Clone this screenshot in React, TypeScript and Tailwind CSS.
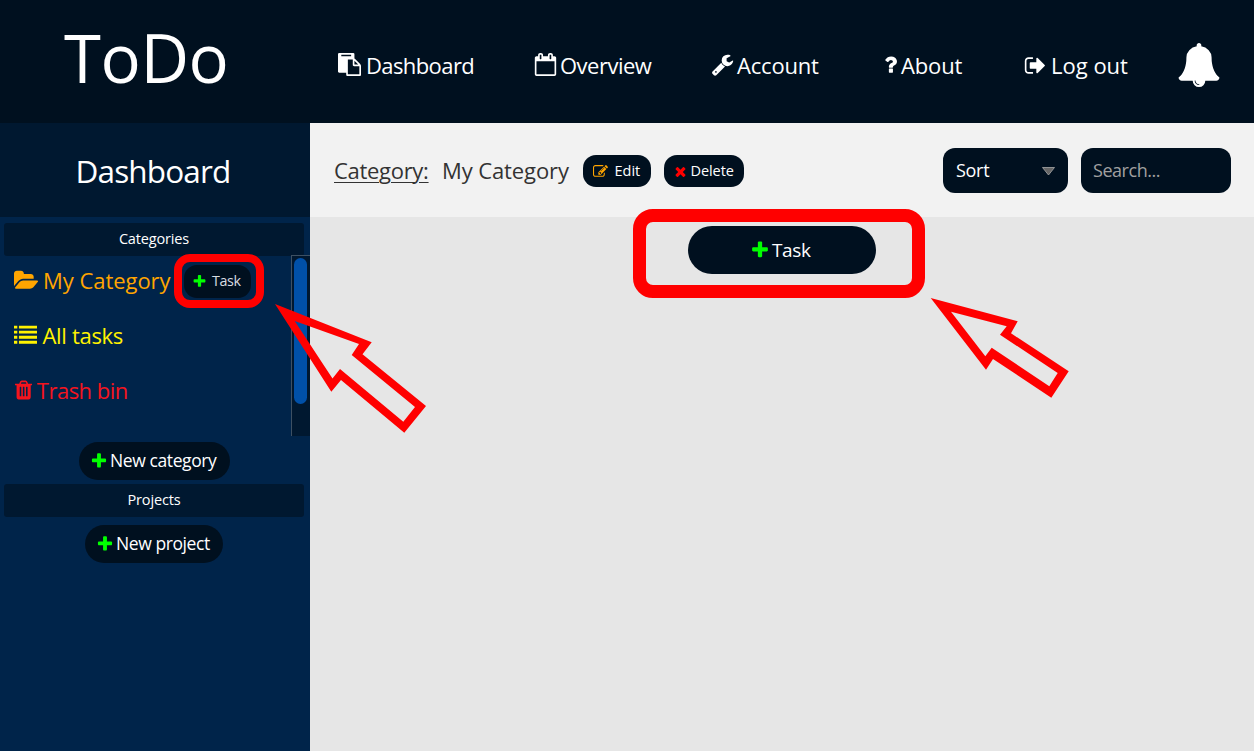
import React from "react";

const PATHS = {
  plus: "M1600 736v192q0 40-28 68t-68 28h-416v416q0 40-28 68t-68 28h-192q-40 0-68-28t-28-68v-416h-416q-40 0-68-28t-28-68v-192q0-40 28-68t68-28h416v-416q0-40 28-68t68-28h192q40 0 68 28t28 68v416h416q40 0 68 28t28 68z",
  times: "M1490 1322q0 40-28 68l-136 136q-28 28-68 28t-68-28l-294-294-294 294q-28 28-68 28t-68-28l-136-136q-28-28-28-68t28-68l294-294-294-294q-28-28-28-68t28-68l136-136q28-28 68-28t68 28l294 294 294-294q28-28 68-28t68 28l136 136q28 28 28 68t-28 68l-294 294 294 294q28 28 28 68z",
  clipboard: "M768 1664h896v-640h-416q-40 0-68-28t-28-68v-416h-384v1152zm256-1440v-64q0-13-9.5-22.5t-22.5-9.5h-704q-13 0-22.5 9.5t-9.5 22.5v64q0 13 9.5 22.5t22.5 9.5h704q13 0 22.5-9.5t9.5-22.5zm256 672h299l-299-299v299zm512 128v672q0 40-28 68t-68 28h-960q-40 0-68-28t-28-68v-160h-544q-40 0-68-28t-28-68v-1344q0-40 28-68t68-28h1088q40 0 68 28t28 68v328q21 13 36 28l408 408q28 28 48 76t20 88z",
  calendar: "M192 1664h1408v-1024h-1408v1024zm384-1216v-288q0-14-9-23t-23-9h-64q-14 0-23 9t-9 23v288q0 14 9 23t23 9h64q14 0 23-9t9-23zm768 0v-288q0-14-9-23t-23-9h-64q-14 0-23 9t-9 23v288q0 14 9 23t23 9h64q14 0 23-9t9-23zm384-64v1280q0 52-38 90t-90 38h-1408q-52 0-90-38t-38-90v-1280q0-52 38-90t90-38h128v-96q0-66 47-113t113-47h64q66 0 113 47t47 113v96h384v-96q0-66 47-113t113-47h64q66 0 113 47t47 113v96h128q52 0 90 38t38 90z",
  wrench: "M448 1472q0-26-19-45t-45-19-45 19-19 45 19 45 45 19 45-19 19-45zm644-420l-682 682q-37 37-90 37-52 0-91-37l-106-108q-38-36-38-90 0-53 38-91l681-681q39 98 114.5 173.5t173.5 114.5zm634-435q0 39-23 106-47 134-164.5 217.5t-258.5 83.5q-185 0-316.5-131.5t-131.5-316.5 131.5-316.5 316.5-131.5q58 0 121.5 16.5t107.5 46.5q16 11 16 28t-16 28l-293 169v224l193 107q5-3 79-48.5t135.5-81 70.5-35.5q15 0 23.5 10t8.5 25z",
  question: "M1088 1256v240q0 16-12 28t-28 12h-240q-16 0-28-12t-12-28v-240q0-16 12-28t28-12h240q16 0 28 12t12 28zm316-600q0 54-15.5 101t-35 76.5-55 59.5-57.5 43.5-61 35.5q-41 23-68.5 65t-27.5 67q0 17-12 32.5t-28 15.5h-240q-15 0-25.5-18.5t-10.5-37.5v-45q0-83 65-156.5t143-108.5q59-27 84-56t25-76q0-42-46.5-74t-107.5-32q-65 0-108 29-35 25-107 115-13 16-31 16-12 0-25-8l-164-125q-13-10-15.5-25t5.5-28q160-266 464-266 80 0 161 31t146 83 106 127.5 41 158.5z",
  signOut: "M704 1440q0 4 1 20t.5 26.5-3 23.5-10 19.5-20.5 6.5h-320q-119 0-203.5-84.5t-84.5-203.5v-704q0-119 84.5-203.5t203.5-84.5h320q13 0 22.5 9.5t9.5 22.5q0 4 1 20t.5 26.5-3 23.5-10 19.5-20.5 6.5h-320q-66 0-113 47t-47 113v704q0 66 47 113t113 47h312l11.5 1 11.5 3 8 5.5 7 9 2 13.5zm928-544q0 26-19 45l-544 544q-19 19-45 19t-45-19-19-45v-288h-448q-26 0-45-19t-19-45v-384q0-26 19-45t45-19h448v-288q0-26 19-45t45-19 45 19l544 544q19 19 19 45z",
  folderOpen: "M1815 952q0 31-31 66l-336 396q-43 51-120.5 86.5t-143.5 35.5h-1088q-34 0-60.5-13t-26.5-43q0-31 31-66l336-396q43-51 120.5-86.5t143.5-35.5h1088q34 0 60.5 13t26.5 43zm-343-344v160h-832q-94 0-197 47.5t-164 119.5l-337 396-5 6q0-4-.5-12.5t-.5-12.5v-960q0-92 66-158t158-66h320q92 0 158 66t66 158v32h544q92 0 158 66t66 158z",
  list: "M0 1312h256v224h-256zM384 1312h1408v224h-1408zM0 918h256v224h-256zM384 918h1408v224h-1408zM0 522h256v224h-256zM384 522h1408v224h-1408zM0 128h256v224h-256zM384 128h1408v224h-1408z",
  trash: "M704 1376v-704q0-14-9-23t-23-9h-64q-14 0-23 9t-9 23v704q0 14 9 23t23 9h64q14 0 23-9t9-23zm256 0v-704q0-14-9-23t-23-9h-64q-14 0-23 9t-9 23v704q0 14 9 23t23 9h64q14 0 23-9t9-23zm256 0v-704q0-14-9-23t-23-9h-64q-14 0-23 9t-9 23v704q0 14 9 23t23 9h64q14 0 23-9t9-23zm-544-992h448l-48-117q-7-9-17-11h-317q-10 2-17 11zm928 32v64q0 14-9 23t-23 9h-96v948q0 83-47 143.5t-113 60.5h-832q-66 0-113-58.5t-47-141.5v-952h-96q-14 0-23-9t-9-23v-64q0-14 9-23t23-9h309l70-167q15-37 54-63t79-26h320q40 0 79 26t54 63l70 167h309q14 0 23 9t9 23z",
  edit: "M888 1184l116-116-152-152-116 116v56h96v96h56zm440-720q-16-16-33 1l-350 350q-17 17-1 33t33-1l350-350q17-17 1-33zm80 594v190q0 119-84.5 203.5t-203.5 84.5h-832q-119 0-203.5-84.5t-84.5-203.5v-832q0-119 84.5-203.5t203.5-84.5h832q63 0 117 25 15 7 18 23 3 17-9 29l-49 49q-14 14-32 8-23-6-45-6h-832q-66 0-113 47t-47 113v832q0 66 47 113t113 47h832q66 0 113-47t47-113v-126q0-13 9-22l64-64q15-15 35-7t20 29zm-96-738l288 288-672 672h-288v-288zm444 132l-92 92-288-288 92-92q28-28 68-28t68 28l152 152q28 28 28 68t-28 68z",
  bell: "M912 1696q0-16-16-16-59 0-101.5-42.5t-42.5-101.5q0-16-16-16t-16 16q0 73 51.5 124.5t124.5 51.5q16 0 16-16zm816-288q0 52-38 90t-90 38h-448q0 106-75 181t-181 75-181-75-75-181h-448q-52 0-90-38t-38-90q50-42 91-88t85-119.5 74.5-158.5 50-206 19.5-260q0-152 117-282.5t307-158.5q-8-19-8-39 0-40 28-68t68-28 68 28 28 68q0 20-8 39 190 28 307 158.5t117 282.5q0 139 19.5 260t50 206 74.5 158.5 85 119.5 91 88z",
};

function Icon({ name, className, viewBox = "0 0 1792 1792" }: { name: keyof typeof PATHS; className: string; viewBox?: string }) {
  return (
    <svg viewBox={viewBox} className={`shrink-0 ${className}`} fill="currentColor" aria-hidden="true">
      <path d={PATHS[name]} />
    </svg>
  );
}

function Header() {
  return (
    <header className="flex h-[123px] shrink-0 bg-[#00101f] text-white">
      <h1 className="h-[115px] w-[338px] pl-[64px] text-[67px] leading-[115px] tracking-[-0.4px]">ToDo</h1>
      <nav className="flex h-[131px] items-center text-[22px]">
        <a className="flex w-[196px] items-center gap-[5px] tracking-[-0.6px]">
          <Icon name="clipboard" className="mb-[2px] size-[23px]" />
          Dashboard
        </a>
        <a className="flex w-[177px] items-center gap-[3px] tracking-[-0.51px]">
          <Icon name="calendar" className="mb-[2px] size-[23px]" />
          Overview
        </a>
        <a className="flex w-[173px] items-center gap-[3px] tracking-[-0.2px]">
          <Icon name="wrench" className="mb-[2px] size-[23px]" />
          Account
        </a>
        <a className="flex w-[140px] items-center gap-[4px] tracking-[-0.15px]">
          <Icon name="question" viewBox="384 0 1024 1792" className="mb-[2px] h-[23px] w-[13px]" />
          About
        </a>
        <a className="flex w-[153px] items-center gap-[4px] tracking-[0px]">
          <Icon name="signOut" className="mb-px size-[23px]" />
          Log out
        </a>
        <Icon name="bell" className="mb-[2px] size-[44px]" />
      </nav>
    </header>
  );
}

function SectionTitle({ children }: { children: React.ReactNode }) {
  return (
    <h3 className="ml-1 h-[33px] w-[300px] shrink-0 rounded-[3px] bg-[#001830] text-center text-[14.5px] leading-[31px] tracking-[-0.15px] text-white">
      {children}
    </h3>
  );
}

function Sidebar() {
  return (
    <aside className="flex w-[310px] shrink-0 flex-col bg-[#00244a]">
      <h2 className="h-[94px] shrink-0 bg-[#001830] pr-[4px] text-center text-[31.5px] leading-[96px] tracking-[-0.85px] text-white">Dashboard</h2>
      <div className="mt-[6px] flex flex-col">
        <SectionTitle>Categories</SectionTitle>
        <div className="-mt-px flex h-[181px] justify-between">
          <ul className="pl-[14px] text-[22px]">
            <li className="flex h-[53px] items-center text-[#ffa500]">
              <Icon name="folderOpen" viewBox="-64 0 1920 1792" className="mb-[3px] h-[23px] w-[24.6px]" />
              <span className="mb-[2px] ml-[4.5px] w-[141px] tracking-[-0.05px]">My Category</span>
              <button className="relative flex h-[33px] w-[67px] items-center rounded-[13px] bg-[#00101f] pb-px pl-2">
                <Icon name="plus" className="mr-px size-[15px] text-[#00ff00]" />
                <span className="ml-[4px] text-[14.3px] tracking-[-0.4px] text-[#d9dde2]">Task</span>
                <span className="absolute -left-[10px] -top-[11px] h-[54px] w-[90px] rounded-[16px] border-8 border-[#ff0000]" />
              </button>
            </li>
            <li className="flex h-[56px] items-center text-[#fff200]">
              <Icon name="list" className="mb-[2px] size-[23px]" />
              <span className="mb-[2px] ml-[5.5px] tracking-[-0.31px]">All tasks</span>
            </li>
            <li className="flex h-[54px] items-center text-[#f5141e]">
              <Icon name="trash" viewBox="192 0 1408 1792" className="mb-[2px] ml-px h-[22px] w-[17.3px]" />
              <span className="mb-[2px] ml-[4.5px] tracking-[-0.5px]">Trash bin</span>
            </li>
          </ul>
          <div className="w-[19px] border-l border-t border-[#3d5063] bg-[#001830] pl-[2px] pt-[2px]">
            <div className="h-[146px] w-[13px] rounded-full bg-[#0050a8]" />
          </div>
        </div>
      </div>
      <button className="ml-[79px] mt-[6px] flex h-[38px] w-[151px] shrink-0 items-center rounded-full bg-[#00101f] pb-px pl-[11px] text-[17.5px] tracking-[-0.4px] text-white">
        <Icon name="plus" className="mr-[2px] size-[18px] text-[#00ff00]" />
        New category
      </button>
      <div className="mt-1 flex flex-col">
        <SectionTitle>Projects</SectionTitle>
      </div>
      <button className="ml-[85px] mt-2 flex h-[38px] w-[138px] shrink-0 items-center rounded-full bg-[#00101f] pb-px pl-[11px] text-[17.5px] tracking-[-0.42px] text-white">
        <Icon name="plus" className="mr-[2px] size-[18px] text-[#00ff00]" />
        New project
      </button>
    </aside>
  );
}

function Toolbar() {
  return (
    <div className="flex h-[94px] shrink-0 items-center bg-[#f2f2f2] pl-[24px] pr-[23px]">
      <span className="w-[108px] text-[22px] tracking-[-0.3px] text-[#333] underline decoration-1 underline-offset-[3px]">Category:</span>
      <span className="w-[140.5px] text-[22px] tracking-[-0.1px] text-[#333]">My Category</span>
      <button className="mt-px flex h-[32px] w-[68.5px] items-center rounded-[13px] bg-[#00101f] pl-[10px] text-[14.5px] text-white">
        <Icon name="edit" className="mr-[7px] mt-px size-[15px] text-[#ffa500]" />
        Edit
      </button>
      <button className="ml-[12.5px] mt-px flex h-[32px] w-[80.5px] items-center rounded-[13px] bg-[#00101f] pl-[9px] text-[14.5px] tracking-[-0.08px] text-white">
        <Icon name="times" className="mr-[3px] mt-[2px] size-[15px] text-[#ff0000]" />
        Delete
      </button>
      <button className="ml-auto flex h-[45px] w-[125px] items-center justify-between rounded-[12px] bg-[#00101f] pl-[13px] pr-[13px] text-[18px] tracking-[-0.3px] text-white">
        Sort
        <svg viewBox="0 0 13 9" className="mt-[2px] h-[9px] w-[13px]">
          <path d="M0.5 0.5h12l-6 7.5z" fill="#666" stroke="#a8a8a8" strokeWidth="0.8" />
        </svg>
      </button>
      <input
        placeholder="Search..."
        className="ml-[13px] h-[45px] w-[150px] rounded-[12px] bg-[#00101f] px-3 text-[18px] tracking-[-0.46px] text-white placeholder:text-[#a0a0a0]"
      />
    </div>
  );
}

export default function App() {
  return (
    <div className="relative flex h-[751px] w-[1254px] flex-col overflow-hidden font-['Open_Sans','Noto_Sans',sans-serif]">
      <Header />
      <div className="flex min-h-0 flex-1">
        <Sidebar />
        <main className="flex flex-1 flex-col bg-[#e6e6e6]">
          <Toolbar />
          <div className="flex justify-center pt-[9px]">
            <button className="relative flex h-[48px] w-[188px] items-center rounded-full bg-[#00101f] pl-[62px] text-[19px] tracking-[-0.4px] text-white">
              <Icon name="plus" className="mr-[2px] size-[20px] text-[#00ff00]" />
              Task
              <span className="absolute -left-[55px] -top-[17px] h-[89px] w-[292px] rounded-[20px] border-[13px] border-[#ff0000]" />
            </button>
          </div>
        </main>
      </div>
      <svg viewBox="0 0 1254 751" className="pointer-events-none absolute inset-0 h-[751px] w-[1254px]" fill="#ff0000" fillRule="evenodd">
        <path d="M275 304L371.7 342.3 362.5 354.3 426 406 404.3 432.7 341 380 331.3 391.7ZM294.7 321L359 344 351.7 355 415 407 403.3 421.7 340 369 332.5 378.5Z" />
        <path d="M930.7 298L1017.7 321.3 1011 333.3 1068.7 371.3 1051.3 397.7 993 359 986 369.7ZM951 311.7L1006.7 326.3 1000 334.7 1057.7 373 1049.3 386.3 991.7 347.7 985.3 356.3Z" />
      </svg>
    </div>
  );
}
